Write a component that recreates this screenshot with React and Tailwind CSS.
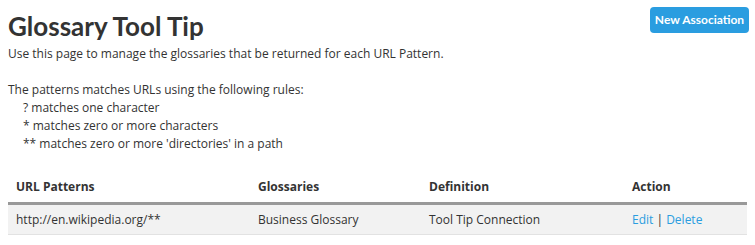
export default function App() {
  const rows = [
    {
      pattern: 'http://en.wikipedia.org/**',
      glossary: 'Business Glossary',
      definition: 'Tool Tip Connection',
    },
  ];

  return (
    <div className="w-[755px] h-[245px] bg-white text-[#333] font-['Open_Sans',sans-serif] text-[12px] px-2 overflow-hidden">
      <div className="flex items-start justify-between">
        <div>
          <h1 className="mt-[10px] font-['Lato',sans-serif] text-[26px] leading-[32px] font-bold text-[#333]">
            Glossary Tool Tip
          </h1>
          <p className="mt-[3px] leading-[17px]">
            Use this page to manage the glossaries that be returned for each URL Pattern.
          </p>
        </div>
        <button className="mt-[7px] mr-[-2px] h-[26px] w-[99px] whitespace-nowrap rounded-[4px] bg-[#2a9de0] font-['Lato',sans-serif] text-white font-bold text-[12px]">
          New Association
        </button>
      </div>

      <div className="mt-[19px] leading-[18px]">
        <p>The patterns matches URLs using the following rules:</p>
        <div className="pl-[15px]">
          <p>? matches one character</p>
          <p>* matches zero or more characters</p>
          <p>** matches zero or more 'directories' in a path</p>
        </div>
      </div>

      <table className="mt-[25px] w-[739px] border-collapse text-left">
        <thead>
          <tr className="border-b-[3px] border-[#999]">
            <th className="w-[250px] pl-2 pb-[6px] font-bold">URL Patterns</th>
            <th className="w-[171px] pb-[6px] font-bold">Glossaries</th>
            <th className="w-[203px] pb-[6px] font-bold">Definition</th>
            <th className="pb-[6px] font-bold">Action</th>
          </tr>
        </thead>
        <tbody>
          {rows.map((r) => (
            <tr key={r.pattern} className="bg-[#f2f2f2] border-b border-[#e2e2e2]">
              <td className="pl-2 h-[31px]">{r.pattern}</td>
              <td>{r.glossary}</td>
              <td>{r.definition}</td>
              <td>
                <a className="text-[#2a9de0]">Edit</a>
                <span> | </span>
                <a className="text-[#2a9de0]">Delete</a>
              </td>
            </tr>
          ))}
        </tbody>
      </table>
    </div>
  );
}
